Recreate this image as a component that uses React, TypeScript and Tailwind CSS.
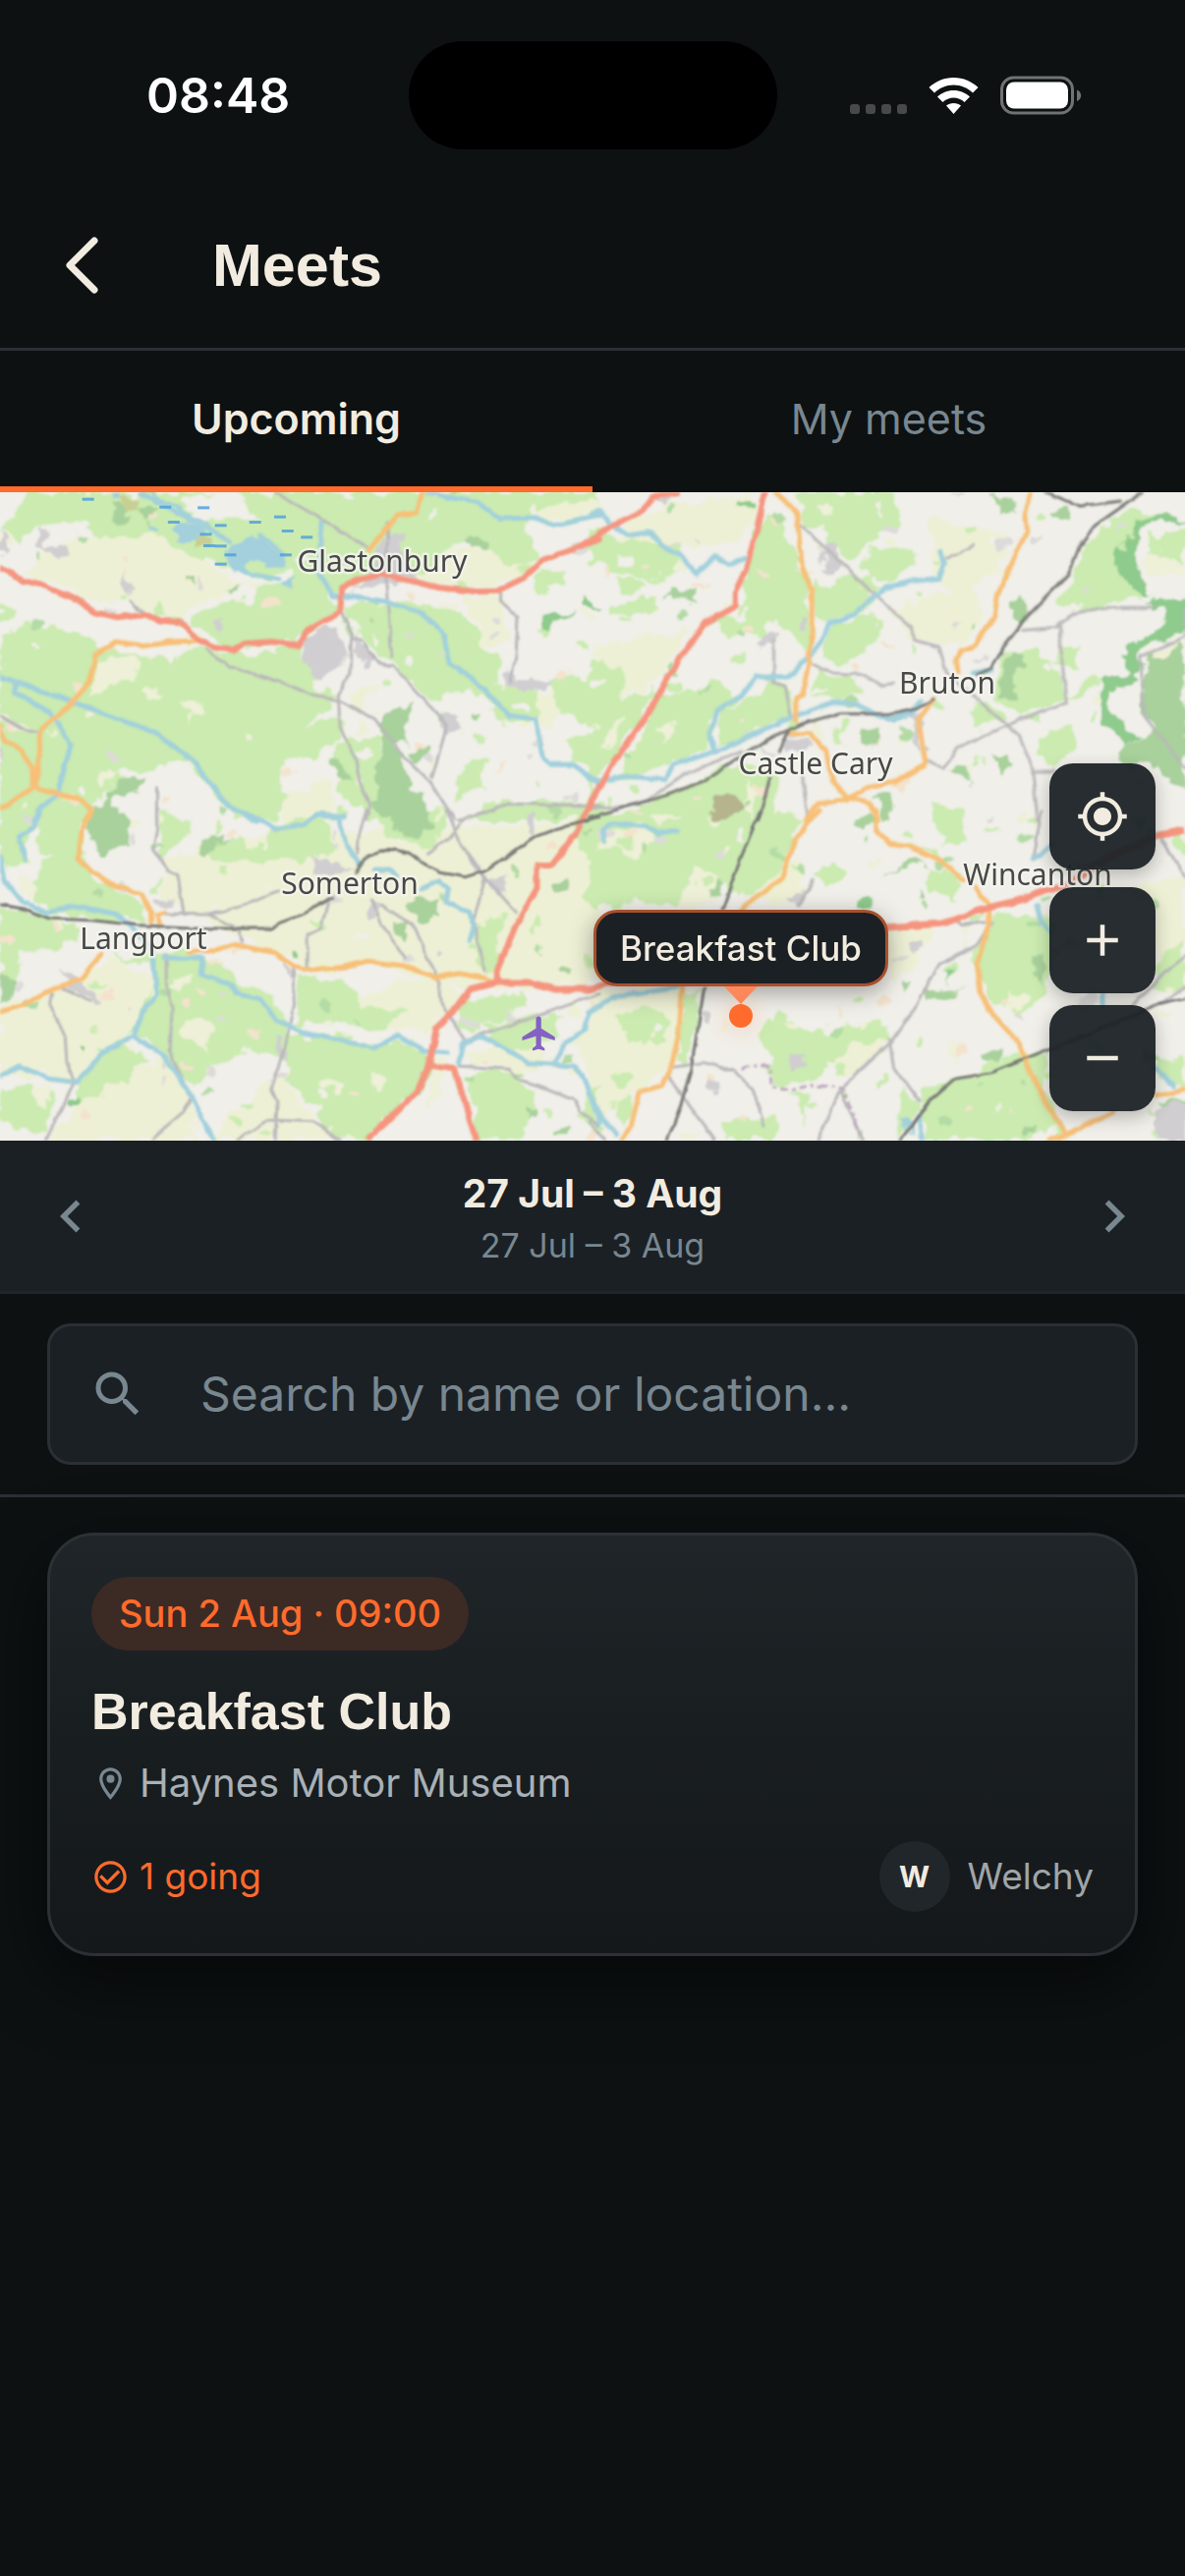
import {
  MdAdd,
  MdCheckCircleOutline,
  MdChevronLeft,
  MdChevronRight,
  MdFlight,
  MdMyLocation,
  MdOutlineLocationOn,
  MdRemove,
  MdSearch,
} from "react-icons/md"

interface Tile {
  transform: string
  fields: string[]
  grass: string[]
  bare: string[]
  woods: string[]
  hills: string[]
  towns: string[]
  water: string[]
  lanes: string[]
  rivers: string[]
  secondary: string[]
  primary: string[]
  rail: string[]
}

// Each tile keeps its own grid, the transform puts it in its quarter of the map
const tiles: Tile[] = [
  {
    transform: "scale(0.389 0.3333) translate(0 -18)",
    fields: [
      "M180 160L420 150 520 210 620 290 660 290 540 340 480 390 380 390 260 340 160 300 60 260 100 220Z",
      "M1180 190L1280 180 1330 240 1410 220 1400 260 1290 310 1160 300 1060 270Z",
      "M1200 340L1300 330 1320 400 1330 480 1250 500 1250 430Z",
      "M900 640L980 600 960 680 1000 700 920 680Z",
      "M1390 60L1568 30 1568 90 1450 110Z",
      "M1380 640L1450 620 1450 740 1400 740Z",
      "M760 930L860 900 880 1020 740 1020Z",
    ],
    grass: [
      "M70 18L560 18 480 40 520 100 600 110 660 90 620 18 1568 18 1568 50 1390 60 1380 150 1410 220 1330 240 1240 150 1180 180 1150 240 1060 270 900 300 880 330 760 300 760 240 720 290 600 250 470 190 400 150 300 160 230 150 220 110 110 120 60 140 40 180 0 130 20 110Z",
      "M500 400L580 350 660 350 680 300 760 290 890 340 890 380 800 440 780 480 600 490 540 470Z",
      "M0 440L80 425 180 440 240 490 300 500 460 540 500 490 560 500 640 510 780 490 830 600 880 640 860 680 800 740 880 700 890 760 830 830 740 820 740 900 760 950 720 1020 620 1020 560 920 500 850 420 850 400 870 310 870 330 900 250 960 240 1020 0 1020Z",
      "M900 350L1090 360 1200 380 1250 440 1250 500 1310 520 1310 600 1230 620 1170 640 1130 640 1080 600 1020 540 940 460 900 400Z",
      "M1250 600L1400 620 1410 700 1320 720 1240 620Z",
      "M1450 590L1568 580 1568 720 1520 720 1450 680Z",
      "M1490 760L1568 770 1568 860 1500 850Z",
      "M880 780L1000 760 990 900 1020 1020 960 1020 890 940Z",
      "M1400 260L1480 250 1470 310 1410 320Z",
      "M0 360L40 370 20 410 0 420Z",
      "M1200 860L1270 830 1260 930 1190 950Z",
      "M1290 960L1568 970 1568 1020 1220 1020Z",
      "M430 410L480 390 480 420Z",
    ],
    bare: [
      "M470 645L520 650 535 700 505 705Z",
      "M370 610L440 620 420 640 370 630Z",
      "M630 750L655 755 645 770 630 765Z",
      "M250 890L310 870 300 900 260 920Z",
      "M0 690L90 740 60 760 0 720Z",
      "M250 530L350 520 355 590 300 600 240 640Z",
    ],
    woods: [
      "M1000 700L1080 655 1060 740 1070 800 1030 780 1060 900 1110 960 1120 1020 1000 1020 960 960 1000 930 980 860 1000 800Z",
      "M1230 150L1275 155 1270 190 1235 185Z",
      "M370 60L410 60 400 100 385 120Z",
      "M250 990L310 910 370 890 370 920 300 950 310 1020 240 1020Z",
      "M290 60L330 60 340 100 320 115Z",
      "M1240 690L1265 700 1255 725 1238 715Z",
      "M470 275L510 280 512 300 475 290Z",
      "M1060 830L1120 790 1130 810 1085 845Z",
      "M590 310L630 300 620 318 600 320Z",
      "M870 830L900 840 905 890 880 890Z",
    ],
    hills: ["M1430 400L1500 390 1480 410 1430 440 1415 420Z", "M1510 310L1520 340 1568 370 1530 370Z"],
    towns: [
      "M790 480L830 440 880 430 900 520 860 590 830 600 800 540Z",
      "M930 450L980 530 960 545 925 510Z",
      "M1000 160L1050 150 1050 200 1100 290 950 310 900 330 960 290Z",
      "M110 120L90 170 140 220 180 200 160 175 120 190Z",
      "M0 130L20 200 0 210Z",
      "M1160 700L1195 710 1190 745 1165 750Z",
      "M560 415L590 405 595 435 570 445Z",
      "M330 250L350 320 335 350Z",
      "M1330 560L1350 600 1470 590 1400 620 1330 610Z",
      "M0 790L15 810 0 850Z",
    ],
    water: [
      "M455 130L500 100 540 140 520 170 460 160Z",
      "M285 22L310 20 315 45 290 48Z",
      "M600 180L680 160 720 190 740 230 690 250 650 230 640 270 600 250Z",
      "M390 115L420 125 410 140 392 135Z",
      "M370 20L520 110 560 130 560 120 500 80 400 22Z",
      "M755 290L775 290 770 310 757 305Z",
    ],
    lanes: [
      "M720 18L870 120 960 185",
      "M1015 110L1010 300 1025 520",
      "M540 500L600 550 740 600 820 640 890 655 980 710 1060 830 1130 910 1190 1020",
      "M895 390L920 450 915 570 885 640 890 740 930 830 940 900 970 980 960 1020",
      "M920 465L950 470 990 540 1030 550 1100 640 1170 730 1130 890",
      "M1310 320L1310 350 1355 400 1350 520 1335 600",
      "M0 700L60 740 100 750",
      "M1200 1020L1330 970 1568 975",
      "M410 920L410 1020",
      "M340 350L380 390",
    ],
    rivers: [
      "M0 580L170 650 400 750 500 830 600 980 670 1020",
      "M40 600L40 630 130 690 185 790 150 940 110 980 90 1020",
      "M838 110L838 270 870 330 1000 350 1100 385 1160 450 1175 540 1240 590 1330 700 1400 710 1420 830 1440 850 1500 850 1568 910",
      "M1120 22L1250 50 1310 100 1400 95 1450 120 1568 90",
      "M370 22L500 100 600 170",
      "M680 150L740 210",
      "M600 230L660 270 730 285",
      "M810 1020L840 1003 900 1010",
    ],
    secondary: [
      "M1105 18L1090 80 1040 90 1010 130 965 195",
      "M510 472L440 475 370 485 300 475 290 490 250 515 235 600 180 670 105 745 95 920 150 940 210 955 240 985 225 1020",
      "M0 730L10 775 60 810 85 860 85 920 0 985",
    ],
    primary: [
      "M0 250L60 285 100 295 200 345 250 385 310 400 375 390 420 410 470 415 520 470 560 492 610 500 640 480 710 475 785 485 800 445 850 410 890 380 895 310 940 285 1000 268 1060 285 1150 310 1250 322 1300 320 1370 280 1420 225 1480 200 1568 160",
      "M1568 915L1520 1020",
    ],
    rail: [],
  },
  {
    transform: "translate(600 0) scale(0.3866 0.3333) translate(0 -18)",
    fields: [
      "M200 60L430 20 430 100 390 180 200 180 60 240 0 250 0 180Z",
      "M20 480L260 440 180 600 90 640 0 520Z",
      "M1480 510L1568 460 1568 500 1470 540Z",
      "M900 90L1090 150 1080 260 950 330 900 250Z",
      "M800 380L1000 300 1040 400 980 480 850 470Z",
    ],
    grass: [
      "M550 30L560 18 810 18 810 100 720 190 680 210 620 190 620 110 560 120Z",
      "M730 190L860 190 870 220 800 280 740 290 720 240Z",
      "M590 290L620 310 700 260 770 310 720 380 620 420 590 360Z",
      "M640 430L740 380 770 430 740 490 680 540 600 510Z",
      "M450 100L480 90 520 150 560 220 570 300 590 480 570 510 500 420 430 430 380 380 410 300Z",
      "M310 430L350 400 460 410 460 450 400 460Z",
      "M0 540L80 560 100 640 180 620 130 700 40 870 0 960Z",
      "M250 620L330 600 400 640 330 700 310 800 240 840 60 900 120 780 180 650Z",
      "M340 690L480 600 540 620 540 700 450 740 340 800Z",
      "M230 930L390 840 470 860 490 900 480 1020 60 1020 100 990Z",
      "M130 350L170 340 190 370 130 400 50 400 60 360Z",
      "M80 280L140 290 130 330 80 320Z",
      "M1380 90L1450 70 1500 90 1430 130 1400 200 1400 270 1470 340 1400 370 1250 380 1240 350 1300 190Z",
      "M1480 160L1568 130 1568 230 1540 220 1470 200Z",
      "M1080 520L1180 500 1220 530 1250 600 1260 640 1330 580 1350 600 1330 620 1250 650 1130 700 1060 640 1080 560Z",
      "M1000 670L1060 660 1090 720 1010 740Z",
      "M1180 760L1270 730 1280 790 1220 850 1170 820Z",
      "M600 560L690 590 720 630 600 650 580 620Z",
      "M900 970L970 980 990 1020 900 1020Z",
      "M0 130L200 180 250 260 120 280 0 240Z",
      "M1240 480L1290 490 1290 560 1230 540Z",
      "M635 740L670 740 670 790 640 790Z",
    ],
    bare: [
      "M180 740L215 710 220 740 190 790Z",
      "M600 60L640 50 650 80 610 90Z",
      "M50 740L90 720 70 790 40 800Z",
      "M420 900L450 950 420 1010 400 980Z",
      "M1480 190L1568 240 1568 280 1500 290 1450 240Z",
    ],
    woods: [
      "M1460 540L1568 480 1568 720 1500 790 1480 720 1450 700Z",
      "M1100 360L1130 345 1155 375 1140 405 1105 400Z",
      "M1100 510L1140 520 1125 650 1075 640Z",
      "M1400 840L1410 790 1470 740 1568 720 1568 930 1490 850Z",
      "M1060 40L1110 30 1120 90 1080 80Z",
      "M1220 80L1260 60 1260 110 1235 115Z",
      "M205 350L215 310 285 320 280 350 220 340Z",
      "M720 750L765 725 750 770 725 790Z",
      "M1050 800L1100 820 1120 850 1080 890Z",
      "M930 860L1000 850 1000 900 950 880Z",
      "M730 940L800 950 800 1020 770 1020 770 970Z",
    ],
    hills: [
      "M1390 200L1440 110 1540 80 1568 110 1500 110 1440 140 1430 210 1460 290 1490 330 1440 330 1390 260Z",
      "M1480 345L1568 330 1568 440 1540 460 1450 500 1450 560 1420 580 1400 530 1410 480 1510 430 1510 380Z",
      "M1350 590L1430 570 1440 600 1370 620 1375 690 1440 760 1410 790 1350 730Z",
      "M400 40L425 45 420 70 400 60Z",
    ],
    towns: [
      "M610 195L650 190 660 240 640 270 620 260Z",
      "M160 40L220 30 190 70Z",
      "M440 450L490 450 480 490 450 480Z",
      "M550 390L570 400 570 440 555 430Z",
      "M840 700L870 690 880 830 850 750Z",
      "M510 770L580 770 590 800 510 810Z",
    ],
    water: ["M780 695L860 690 810 725Z"],
    lanes: [
      "M555 120L660 230 740 320 850 430 855 470 920 490 940 570 1030 660 1130 760 1165 860 1180 1020",
      "M590 545L640 570 720 575 770 610 800 600",
      "M485 470L485 600 515 610 530 700",
      "M1140 440L1230 430 1270 390 1350 370 1490 370",
      "M1240 420L1240 510 1258 660 1130 715 1060 750 970 800 930 860 890 840",
      "M0 980L90 980 150 960 250 880 400 810",
      "M1568 370L1568 460 1450 520 1460 700 1568 860",
      "M560 880L575 1020",
      "M940 220L1010 180",
      "M1170 870L1220 870",
    ],
    rivers: [
      "M0 90L30 75 50 110 100 150 160 140 190 180 240 210 280 270 330 215 370 235 410 220",
      "M925 200L935 240 920 280 850 290 780 310 740 340 700 390 630 420 610 480 520 585 440 580 400 640 340 680 315 750 330 810 390 780 500 720 640 660 700 665 760 700 800 710 850 690 870 655",
      "M330 810L220 850 200 895 100 885 30 900 0 890",
      "M1010 570L1060 560",
    ],
    secondary: [
      "M490 18L545 80 560 250 585 320 585 480 575 510 580 540 560 640 545 650 545 715",
      "M1160 18L1145 80 1150 140 1110 240 1075 330 1065 400 1010 490 980 500 965 530 970 570",
      "M905 650L865 710 885 850 800 905 740 915 680 955 600 970 570 1020",
      "M525 755L580 755 625 810 640 900 680 950 740 970 760 1020",
    ],
    primary: ["M0 170L60 120 140 75 170 30 230 18", "M462 18L440 130 410 260 385 320 385 365 300 420 230 540 150 700 60 850 0 980"],
    rail: [
      "M1455 18L1330 120 1290 180 1260 270 1150 400 1090 490 1060 555 1020 575",
      "M905 650L860 680 800 695 660 695 570 720 480 765 420 810 300 900 200 945 0 1010",
      "M520 750L500 810",
      "M475 890L445 1020",
      "M1200 18L1290 60 1400 45",
    ],
  },
  {
    transform: "translate(0 324) scale(0.389 0.3333)",
    fields: [
      "M560 100L1010 60 1500 40 1568 200 1568 520 1300 540 1150 520 960 460 850 490 740 440 560 350 420 260 440 150Z",
      "M0 600L200 520 300 450 400 520 400 620 330 720 200 830 0 800Z",
      "M200 900L420 760 500 860 520 1007 120 1007Z",
      "M550 1007L720 800 850 980 960 1000Z",
      "M900 560L1150 500 1220 580 1100 680 900 640Z",
      "M1200 760L1400 700 1450 780 1350 800Z",
      "M1490 700L1568 660 1568 860Z",
    ],
    grass: [
      "M0 0L100 0 60 70 70 150 30 180 0 140Z",
      "M100 0L220 0 210 150 260 220 330 250 380 290 390 340 340 340 120 310 80 250 130 130 90 100Z",
      "M0 290L200 340 200 400 60 440 30 520 0 500Z",
      "M280 440L540 440 620 520 700 570 760 640 760 680 900 700 1000 730 1040 690 1130 740 1130 800 1050 900 960 1000 850 980 840 920 740 830 740 740 620 740 560 780 510 850 440 780 380 700 340 690 400 560 400 480Z",
      "M780 500L900 520 960 600 1060 610 1000 670 900 650 780 650Z",
      "M540 80L600 90 700 120 720 40 840 20 890 120 860 150 720 150 620 160 540 130Z",
      "M1200 590L1300 560 1380 540 1370 600 1300 640 1210 660Z",
      "M1220 800L1340 790 1400 870 1370 1000 1250 1000Z",
      "M210 800L300 700 400 760 340 810 260 880 200 900Z",
      "M0 860L80 830 140 860 120 980 0 960Z",
      "M1500 0L1568 0 1568 180 1500 120Z",
      "M420 0L500 40 440 140 410 80Z",
      "M1250 350L1320 330 1300 500 1250 470Z",
      "M1540 850L1568 840 1568 1000 1520 940Z",
      "M960 0L1180 0 1130 120 1000 60Z",
      "M1260 650L1480 630 1440 700 1350 740 1280 700Z",
    ],
    bare: [
      "M450 510L510 510 480 550 450 540Z",
      "M480 620L550 640 550 740 480 690Z",
      "M840 640L870 640 860 655 840 655Z",
      "M980 790L1020 820 990 860 970 830Z",
      "M1120 740L1200 780 1120 900 1130 820Z",
      "M60 210L95 230 80 260 50 250Z",
      "M320 20L370 20 350 60 320 50Z",
      "M400 530L420 560 405 580Z",
      "M850 810L900 830 890 860 850 850Z",
      "M90 840L130 840 120 900 90 890Z",
    ],
    woods: [
      "M240 20L320 0 340 100 290 130 230 100Z",
      "M1010 0L1120 0 1140 60 1110 90 1030 50Z",
      "M1060 280L1150 270 1160 320 1110 345 1070 310Z",
      "M1450 205L1480 190 1490 230 1470 245 1445 230Z",
      "M1030 340L1060 340 1060 400 1040 390Z",
      "M1380 900L1400 900 1400 930 1380 930Z",
      "M1455 980L1490 970 1490 1000 1455 1000Z",
      "M520 130L550 80 620 90 560 110 540 140Z",
      "M1465 485L1500 475 1500 500 1470 505Z",
      "M0 480L40 520 30 580 0 590Z",
    ],
    hills: ["M760 430L790 435 785 450 760 450Z", "M190 880L212 880 205 905 190 900Z", "M210 720L228 725 222 740 210 735Z"],
    towns: [
      "M820 150L900 170 940 190 830 190Z",
      "M1270 220L1320 190 1320 250 1290 250Z",
      "M1380 20L1410 20 1400 70 1380 60Z",
      "M970 280L995 290 990 330 975 330Z",
      "M735 680L755 690 745 760 730 740Z",
      "M160 490L230 530 270 600 240 590 170 540Z",
      "M1140 430L1165 430 1155 460 1140 455Z",
      "M740 475L775 480 770 510 750 505Z",
      "M400 265L460 270 450 290 400 285Z",
    ],
    water: [],
    lanes: [
      "M410 0L410 60 400 120 440 180 465 195 480 310",
      "M430 315L550 318 640 290 730 245",
      "M550 320L620 360 635 400",
      "M860 270L840 360 805 380 805 480",
      "M765 480L770 590 740 740 710 850 725 890 720 1007",
      "M435 440L435 520 450 600 445 740 500 880 480 920 400 1000",
      "M135 560L130 590 170 690 175 770 195 830 120 1007",
      "M960 0L940 70 935 130",
      "M1170 0L1190 70 1250 180 1350 310",
      "M1290 0L1220 20 1180 80 1120 130",
      "M1000 290L1080 350 1110 430 1150 530 1155 590 1215 700 1200 770",
      "M970 270L1000 350 1060 450",
      "M1270 200L1240 330 1265 490",
      "M1568 560L1400 630 1240 690 1210 710",
      "M1200 780L1330 790 1350 820 1410 840 1500 880 1520 920 1568 960",
      "M620 1007L700 945 820 950 890 1007",
      "M160 540L240 580",
    ],
    rivers: [
      "M100 0L90 50 50 80 65 150",
      "M0 140L10 210 60 280 120 310 190 290 300 315 340 350 400 430 410 560 370 620 350 690 270 740 200 830 130 820 50 780 0 810",
      "M350 690L430 750 500 870 560 1007",
      "M610 0L660 15 720 55 790 45 830 15 885 20 905 100 940 165",
      "M980 180L1020 180 1040 200",
      "M1100 240L1150 215 1170 240 1165 280 1225 310 1240 350 1230 400",
      "M430 450L530 450 525 500 600 530 620 560 680 575 720 640 800 680 980 725 1040 685 1110 735 1170 740",
      "M1200 770L1210 710 1260 690 1310 720 1380 770 1450 775 1500 780 1530 820 1568 950",
      "M1450 770L1480 710 1530 670 1540 620 1568 600",
    ],
    secondary: [
      "M235 0L215 50 205 150 240 190 310 235 370 255 395 310 395 340",
      "M430 310L410 320 420 350",
      "M265 440L210 515 130 550 60 595 0 615",
      "M500 430L560 428 610 408 720 435 770 475 820 488 900 478 960 460 1060 475 1140 510 1200 498 1260 510 1300 525",
    ],
    primary: [
      "M1535 0L1500 80 1445 165 1405 165 1405 240 1350 350 1300 490 1300 525",
      "M1130 780L1190 790 1245 1007",
    ],
    rail: ["M0 287L60 300 130 330 240 335 360 350 560 360 710 360 790 315 870 265", "M930 190L960 140 1020 118 1070 130 1150 190 1220 203 1270 185 1400 80 1480 45 1568 20"],
  },
  {
    transform: "translate(600 324) scale(0.3866 0.3333)",
    fields: [
      "M0 560L240 540 220 780 120 860 0 960Z",
      "M470 140L560 160 560 280 440 280Z",
      "M780 360L900 350 860 480 790 500Z",
      "M640 720L780 700 700 820 640 790Z",
      "M1390 240L1568 200 1568 440 1490 500 1490 300Z",
    ],
    grass: [
      "M0 0L460 0 560 30 520 120 500 200 400 260 350 220 280 280 0 290Z",
      "M600 180L640 160 660 180 660 220 620 230Z",
      "M890 160L980 210 970 270 890 240Z",
      "M900 0L980 0 990 90 930 110Z",
      "M1060 310L1200 310 1230 420 1200 560 1130 620 1040 560 1020 440Z",
      "M470 630L540 640 590 680 680 650 780 650 790 700 680 720 620 800 520 850 480 840 480 780 440 700Z",
      "M60 630L180 600 220 640 200 700 100 710Z",
      "M870 860L1000 800 1150 740 1210 740 1200 840 1230 960 1150 1005 880 1005Z",
      "M250 560L300 560 250 800 230 700Z",
      "M350 960L420 930 490 940 480 1005 360 1005Z",
      "M1500 440L1568 400 1568 560 1490 560Z",
      "M1490 740L1568 760 1568 840 1500 820Z",
      "M60 890L110 860 120 930 70 960Z",
      "M820 840L870 900 840 960 810 1005Z",
      "M1540 60L1568 60 1568 130 1540 120Z",
      "M540 860L590 870 560 960Z",
    ],
    bare: [
      "M50 60L150 50 170 90 120 130 30 110Z",
      "M280 180L320 190 340 280 230 290Z",
      "M150 10L240 10 180 40Z",
      "M1090 560L1150 580 1110 620Z",
      "M930 700L990 710 960 760Z",
    ],
    woods: [
      "M320 0L370 0 365 20 325 20Z",
      "M700 50L740 0 770 0 720 60Z",
      "M780 190L850 150 890 160 810 180Z",
      "M880 550L940 535 990 540 920 575 885 575Z",
      "M820 520L860 530 830 550Z",
      "M1040 740L1080 730 1080 780 1050 770Z",
      "M1140 960L1180 950 1180 980 1145 990Z",
      "M330 210L345 220 340 270 325 260Z",
      "M1495 900L1540 870 1568 880 1568 930Z",
      "M860 240L880 260 860 275Z",
      "M1175 440L1200 440 1195 530 1175 520Z",
    ],
    hills: ["M935 500L960 500 950 525Z", "M710 270L730 260 740 300 715 295Z"],
    towns: [
      "M1480 920L1568 880 1568 1005 1500 1005Z",
      "M530 740L560 730 570 780 540 800Z",
      "M840 400L870 380 880 420 850 440Z",
      "M290 620L320 620 320 650 300 650Z",
      "M530 250L560 250 550 300Z",
      "M310 820L350 820 350 850 310 840Z",
    ],
    water: ["M820 930L840 930 850 980 825 970Z"],
    lanes: [
      "M1060 340L1020 410 920 470 860 600 800 700 660 850 600 1007",
      "M790 700L800 780 870 890",
      "M215 785L300 770 380 795 430 850 460 960",
      "M205 810L330 1007",
      "M660 850L720 1007",
      "M1190 0L1170 140",
      "M1500 80L1568 200",
      "M1430 590L1568 440",
      "M1568 540L1490 600",
      "M0 950L40 1007",
      "M590 210L550 290",
      "M1050 340L980 350 960 330",
    ],
    rivers: [
      "M40 95L35 60 60 40 150 50 180 70 230 60",
      "M0 620L60 570 130 560 230 540",
      "M0 860L20 920 70 990",
      "M1220 100L1170 150",
      "M1180 290L1190 340 1215 370",
      "M1350 560L1350 600",
      "M875 1005L870 930",
      "M1490 790L1540 840",
    ],
    secondary: [
      "M245 530L235 680 215 780 190 840 130 860 110 960 85 1007",
      "M605 0L570 40 530 120 505 210 430 270 400 310",
      "M755 0L755 60 790 100 830 105 920 150 985 210",
      "M1015 235L1050 290 1050 350 1020 470 1030 560 1060 620 1130 710 1160 800 1200 890 1255 990 1380 920",
      "M1255 990L1210 1007",
      "M1490 870L1568 850",
    ],
    primary: [],
    rail: [
      "M450 0L400 140 350 300",
      "M302 540L280 700 265 800 240 900 205 1007",
      "M820 1007L900 880 960 820 1060 800 1210 730 1400 640 1490 595 1568 575",
    ],
  },
]

const trunkRoad =
  "M373 660L425 610 436 584 445 545 462 528 478 506 505 499 540 499 565 506 600 506 640 492M900 443L960 439 1005 423 1040 415 1060 407 1085 400 1130 370 1180 349 1206 344"

const dashes = [
  [430, 62], [530, 64], [452, 108], [536, 145], [665, 108], [575, 118], [750, 135],
  [800, 154], [545, 180], [575, 181], [600, 208], [745, 208], [575, 236], [730, 92], [228, 38],
]

const labels = [
  { name: "Glastonbury", x: 389, y: 81 },
  { name: "Bruton", x: 964, y: 205 },
  { name: "Castle Cary", x: 830, y: 287 },
  { name: "Somerton", x: 356, y: 409 },
  { name: "Langport", x: 146, y: 465 },
  { name: "Wincanton", x: 1056, y: 400 },
]

// small copses and farm plots, the same on every render
const specks = Array.from({ length: 420 }, (_, i) => {
  const a = Math.abs(Math.sin(i * 12.9898) * 43758.5453) % 1
  const b = Math.abs(Math.sin(i * 78.233) * 12543.1234) % 1
  const c = Math.abs(Math.sin(i * 39.425) * 9631.771) % 1
  const colors = ["#f0efe9", "#cbebb0", "#eef0d5", "#b4dba5", "#dddbd9", "#cbebb0", "#f4e2cc"]
  return { x: a * 1206, y: b * 660, rx: 2 + c * 6, ry: 2 + ((c * 17) % 1) * 4, fill: colors[i % colors.length] }
})

type Layer = Exclude<keyof Tile, "transform">

function Areas({ layer, fill }: { layer: Layer; fill: string }) {
  return (
    <>
      {tiles.map((tile) => (
        <g key={tile.transform} transform={tile.transform}>
          <path d={tile[layer].join("")} fill={fill} />
        </g>
      ))}
    </>
  )
}

function Lines({ layer, stroke, width }: { layer: Layer; stroke: string; width: number }) {
  return (
    <>
      {tiles.map((tile) => (
        <g key={tile.transform} transform={tile.transform}>
          <path
            d={tile[layer].join("")}
            fill="none"
            stroke={stroke}
            strokeWidth={width}
            strokeLinejoin="round"
            strokeLinecap="round"
            vectorEffect="non-scaling-stroke"
          />
        </g>
      ))}
    </>
  )
}

function MapDrawing() {
  return (
    <svg viewBox="0 0 1206 660" preserveAspectRatio="xMidYMid slice" className="block w-full h-full" aria-label="Map">
      <defs>
        <filter id="rough" x="0" y="0" width="100%" height="100%">
          <feTurbulence type="fractalNoise" baseFrequency="0.05" numOctaves="3" seed="4" />
          <feDisplacementMap in="SourceGraphic" scale="22" xChannelSelector="R" yChannelSelector="G" />
          <feGaussianBlur stdDeviation="1" />
        </filter>
        <filter id="wobble" x="0" y="0" width="100%" height="100%">
          <feTurbulence type="fractalNoise" baseFrequency="0.06" numOctaves="2" seed="9" />
          <feDisplacementMap in="SourceGraphic" scale="5" xChannelSelector="R" yChannelSelector="G" />
          <feGaussianBlur stdDeviation="0.8" />
        </filter>
      </defs>
      <rect width="1206" height="660" fill="#f0efe9" />
      <g filter="url(#rough)">
        <rect x="-40" y="-40" width="1286" height="740" fill="#f0efe9" />
        <Areas layer="fields" fill="#eef0d5" />
        <Areas layer="grass" fill="#cbebb0" />
        <Areas layer="bare" fill="#eef0d8" />
        {specks.map((s, i) => (
          <ellipse key={i} cx={s.x} cy={s.y} rx={s.rx} ry={s.ry} fill={s.fill} />
        ))}
        <Areas layer="woods" fill="#a9d19c" />
        <Areas layer="hills" fill="#8fcb8d" />
        <Areas layer="towns" fill="#d0ced0" />
        <Areas layer="water" fill="#a3d0dc" />
        <path d="M723 310L745 304 757 316 745 330 724 334Z" fill="#b5b48d" />
        <path d="M120 6L140 4 142 18 125 16ZM200 45L214 46 212 58 200 57Z" fill="#c8cf94" />
      </g>
      <g filter="url(#wobble)">
        <Lines layer="lanes" stroke="#bab8ba" width={3} />
        <Lines layer="rivers" stroke="#a3d0dc" width={5} />
        <Lines layer="secondary" stroke="#f7c078" width={5} />
        <Lines layer="primary" stroke="#f5957f" width={6} />
        <path d={trunkRoad} fill="none" stroke="#f5957f" strokeWidth="7" strokeLinejoin="round" />
        <Lines layer="rail" stroke="#777875" width={3} />
        <path
          d="M756 588L760 584 784 584 785 606 805 609 830 604 858 606 868 630 876 658"
          fill="none"
          stroke="#bfa9bf"
          strokeWidth="3"
          strokeDasharray="9 4 3 4"
        />
      </g>
      {dashes.map(([x, y]) => (
        <rect key={`${x}-${y}`} x={x * 0.389 - 5} y={(y - 18) / 3 - 1} width="12" height="3" fill="#4a9be0" opacity="0.8" />
      ))}
      <MdFlight x={528} y={530} size={42} color="#8461c4" />
      <g
        fontFamily='"Noto Sans", sans-serif'
        fontSize="30"
        textAnchor="middle"
        fill="#484848"
        stroke="#f4f4ee"
        strokeOpacity="0.8"
        strokeWidth="5"
        strokeLinejoin="round"
        paintOrder="stroke"
      >
        {labels.map((label) => (
          <text key={label.name} x={label.x} y={label.y}>
            {label.name}
          </text>
        ))}
      </g>
    </svg>
  )
}

function StatusBar() {
  return (
    <div className="grid grid-cols-[1fr_375px_1fr] items-center pt-[42px] pb-[34px] text-white">
      <span className="pl-[149px] text-[50px] leading-none font-semibold">08:48</span>
      <div className="h-[110px] rounded-full bg-black" />
      <div className="flex items-center justify-end pr-[105px]">
        <svg width="236" height="40" viewBox="0 0 236 40" aria-hidden="true">
          {[0, 16, 32, 48].map((x) => (
            <rect key={x} x={x} y="29" width="10" height="10" rx="3" fill="#47494b" />
          ))}
          <path d="M105.500 2C95.500 2 87 6 80.500 12L86 17.500C91 12.500 98 9.500 105.500 9.500S120 12.500 125 17.500L130.500 12C124 6 115.500 2 105.500 2Z" fill="#fff" />
          <path d="M105.500 15C99 15 93.500 17.500 89 21.500L94.500 27C97.500 24 101.500 22.500 105.500 22.500S113.500 24 116.500 27L122 21.500C117.500 17.500 112 15 105.500 15Z" fill="#fff" />
          <path d="M105.500 28C102.500 28 100 29 98 30.500L105.500 39 113 30.500C111 29 108.500 28 105.500 28Z" fill="#fff" />
          <rect x="154.500" y="2" width="72" height="36" rx="12" fill="none" stroke="#707273" strokeWidth="3" />
          <rect x="159" y="6.500" width="63" height="27" rx="8" fill="#fff" />
          <path d="M231 14.500C236.500 16.500 236.500 24 231 26Z" fill="#707273" />
        </svg>
      </div>
    </div>
  )
}

function MapButton({ label, children }: { label: string; children: React.ReactNode }) {
  return (
    <button
      aria-label={label}
      className="flex items-center justify-center size-[108px] rounded-3xl bg-[#1b2226]/95 text-[#f2ece0] shadow-[0_6px_18px_rgba(0,0,0,0.25)]"
    >
      {children}
    </button>
  )
}

function MeetMap() {
  return (
    <section className="relative h-[660px] overflow-hidden">
      <MapDrawing />
      <div className="absolute top-[425px] left-[calc(50%+151px)] -translate-x-1/2 flex flex-col items-center">
        <button className="h-[78px] px-6 rounded-3xl border-3 border-[#a84f2e] bg-[#1b2024] text-[35px] leading-none font-medium text-[#f2ece0] whitespace-nowrap shadow-[0_6px_24px_rgba(0,0,0,0.35)]">
          Breakfast Club
        </button>
        <svg width="34" height="18" viewBox="0 0 34 18" aria-hidden="true">
          <path d="M0 0H34L17 18Z" fill="#fb8a5d" />
        </svg>
        <span className="size-6 rounded-full bg-[#ff6b2c] shadow-[0_0_24px_rgba(255,107,44,0.3)]" />
      </div>
      <div className="absolute right-[30px] bottom-[30px] flex flex-col gap-3">
        <div className="pb-1.5">
          <MapButton label="My location">
            <MdMyLocation size={54} />
          </MapButton>
        </div>
        <MapButton label="Zoom in">
          <MdAdd size={54} />
        </MapButton>
        <MapButton label="Zoom out">
          <MdRemove size={54} />
        </MapButton>
      </div>
    </section>
  )
}

function MeetCard() {
  return (
    <article className="rounded-[48px] border-3 border-[#2c3135] bg-linear-to-b from-[#202529] via-[#191e21] via-45% to-[#14181b] p-[42px] shadow-[0_24px_72px_rgba(0,0,0,0.55)]">
      <span className="inline-flex items-center h-[75px] px-7 rounded-full bg-[#3c2a25] text-[38px] font-medium text-[#ff6b2c]">
        Sun 2 Aug · 09:00
      </span>
      <h2 className="mt-8 font-['Liberation_Sans',sans-serif] text-[52px] leading-[60px] font-bold text-[#f2ece0]">
        Breakfast Club
      </h2>
      <p className="mt-4 flex items-center gap-2.5 text-[40px] leading-[54px] text-[#a9b1b6]">
        <MdOutlineLocationOn size={39} className="text-[#788790]" />
        Haynes Motor Museum
      </p>
      <div className="mt-8 flex items-center justify-between">
        <span className="flex items-center gap-2.5 text-[37px] text-[#ff6b2c]">
          <MdCheckCircleOutline size={39} />1 going
        </span>
        <span className="flex items-center gap-[18px] text-[37px] text-[#a0a5a8]">
          <span className="flex items-center justify-center size-[72px] rounded-full bg-[#21262b] text-[30px] font-bold text-[#f2ece0]">
            W
          </span>
          Welchy
        </span>
      </div>
    </article>
  )
}

export default function App() {
  return (
    <div className="min-h-screen bg-[#0d1112] font-['Inter',sans-serif]">
      <StatusBar />

      <header className="flex items-center h-[171px] border-b-3 border-[#2b3035]">
        <button aria-label="Back" className="flex items-center justify-center w-[168px] text-[#f2ece0]">
          <svg width="34" height="58" viewBox="0 0 34 58" aria-hidden="true">
            <path d="M29 4L4 29 29 54" fill="none" stroke="currentColor" strokeWidth="7" strokeLinecap="round" strokeLinejoin="round" />
          </svg>
        </button>
        <h1 className="pl-12 font-['Liberation_Sans',sans-serif] text-[61px] leading-none font-bold text-[#f2ece0]">Meets</h1>
      </header>

      <nav className="grid grid-cols-2 h-[144px] text-[43px]">
        <button className="border-b-6 border-[#ff6b2c] font-semibold text-[#f2ece0]">Upcoming</button>
        <button className="border-b-6 border-transparent text-[#788790]">My meets</button>
      </nav>

      <MeetMap />

      <div className="flex items-center justify-between h-[156px] border-b-3 border-[#20252a] bg-[#1b2024] text-[#788790]">
        <button aria-label="Previous week" className="flex items-center justify-center size-36">
          <MdChevronLeft size={66} />
        </button>
        <div className="pt-1.5 text-center">
          <p className="text-[39px] leading-[54px] font-bold text-[#f2ece0]">27 Jul – 3 Aug</p>
          <p className="text-[34px] leading-[51px]">27 Jul – 3 Aug</p>
        </div>
        <button aria-label="Next week" className="flex items-center justify-center size-36">
          <MdChevronRight size={66} />
        </button>
      </div>

      <div className="px-12 py-[30px] border-b-3 border-[#2b3035]">
        <label className="flex items-center h-36 pl-[39px] rounded-3xl border-3 border-[#2b3035] bg-[#1b2024] text-[#788790]">
          <MdSearch size={60} />
          <input
            type="search"
            aria-label="Search by name or location"
            placeholder="Search by name or location..."
            className="flex-1 ml-[54px] bg-transparent text-[48px] outline-none placeholder:text-[#788790]"
          />
        </label>
      </div>

      <main className="px-12 py-9">
        <MeetCard />
      </main>
    </div>
  )
}
